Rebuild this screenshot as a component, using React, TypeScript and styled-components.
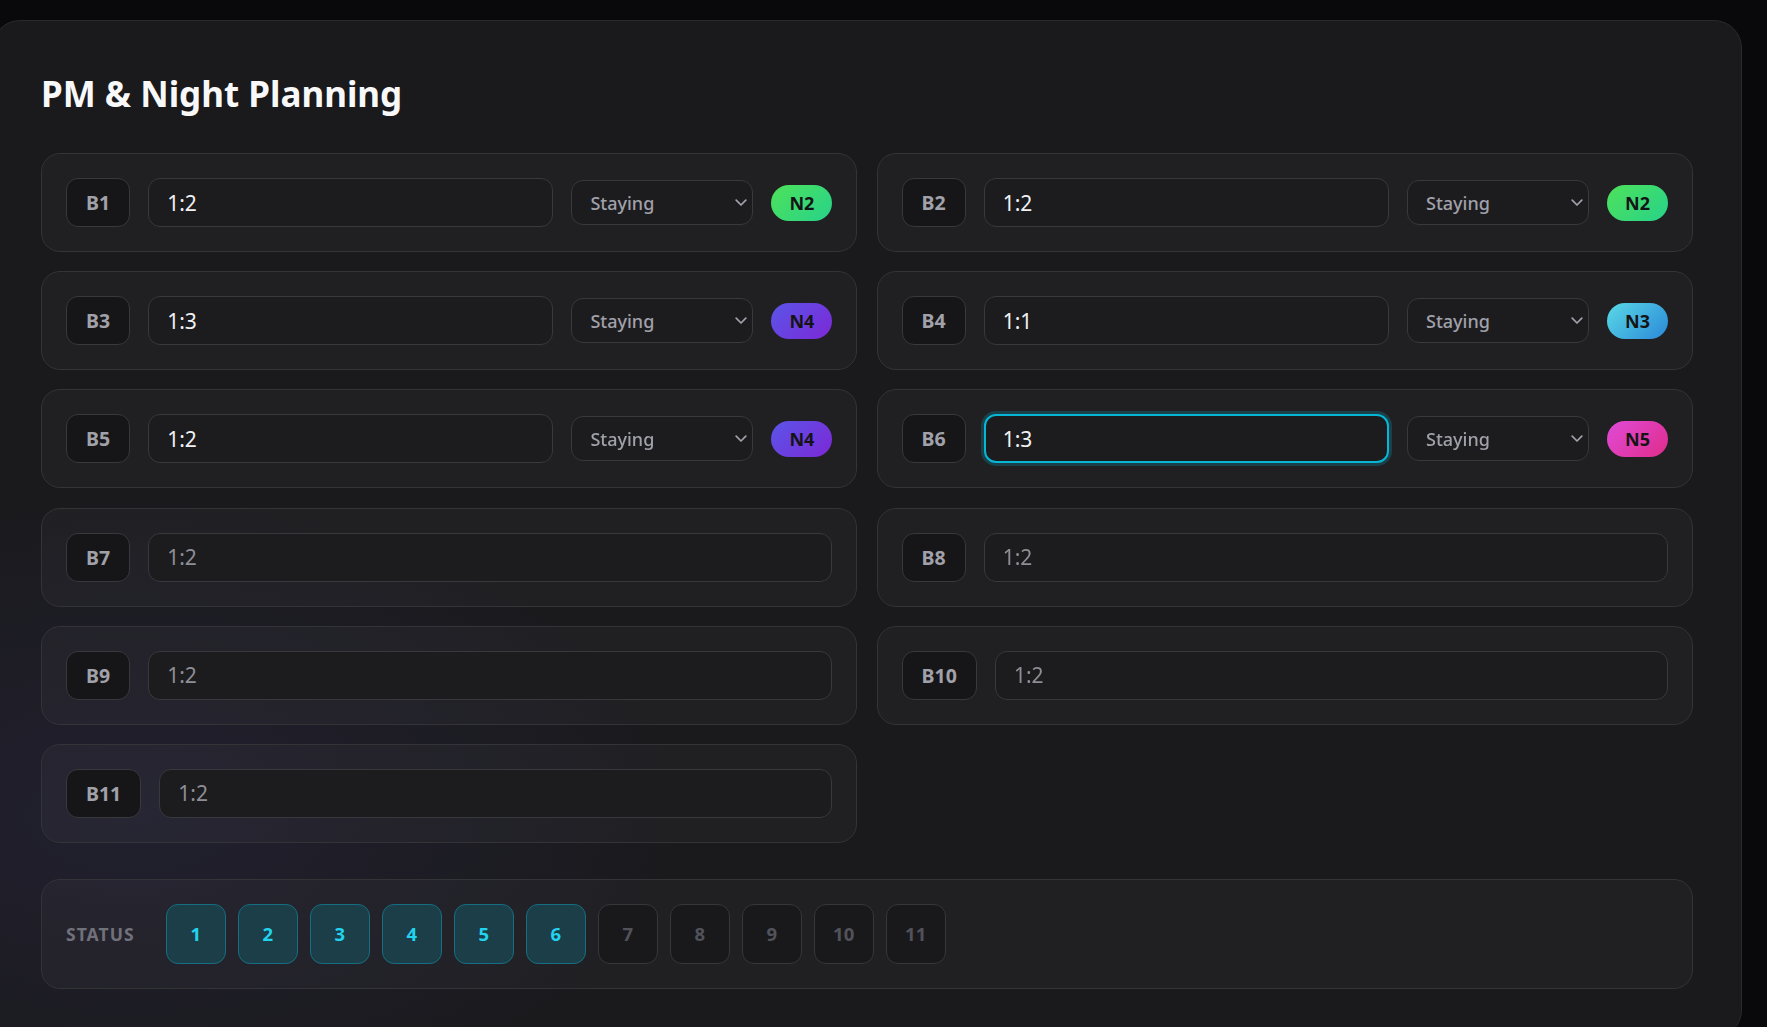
import React, { useEffect, useRef } from "react";
import styled, { createGlobalStyle, css } from "styled-components";

const GlobalStyle = createGlobalStyle`
  html, body {
    margin: 0;
    padding: 0;
    background: #09090b;
  }
  body {
    font-family: "Segoe UI", "Noto Sans", "Open Sans", sans-serif;
    color: #f4f4f5;
    overflow: hidden;
  }
  * { box-sizing: border-box; }
`;

const Page = styled.div`
  padding-top: 20px;
  min-height: 1027px;
`;

const Panel = styled.section`
  margin-left: -8px;
  width: 1750px;
  padding: 48px;
  border: 1px solid #2a2a2e;
  border-radius: 28px;
  background:
    radial-gradient(ellipse 45% 45% at 8% 78%, rgba(72, 62, 140, 0.16), transparent 70%),
    #1a1a1d;
`;

const Title = styled.h1`
  margin: 0 0 36px;
  padding-top: 2px;
  font-size: 35px;
  line-height: 46px;
  font-weight: 700;
  color: #f8f8f9;
`;

const Grid = styled.div`
  display: grid;
  grid-template-columns: 1fr 1fr;
  column-gap: 19.2px;
  row-gap: 19.2px;
  margin-bottom: 36px;
`;

const Card = styled.div`
  display: flex;
  align-items: center;
  gap: 18px;
  padding: 24px;
  border: 1px solid #333338;
  border-radius: 19px;
  background: rgba(255, 255, 255, 0.028);
`;

const BedLabel = styled.div`
  flex: none;
  height: 49px;
  padding: 0 19px;
  display: flex;
  align-items: center;
  justify-content: center;
  border: 1px solid #38383d;
  border-radius: 12px;
  background: #161618;
  color: #a1a1aa;
  font-size: 19.5px;
  font-weight: 700;
`;

const RatioInput = styled.input<{ $focused?: boolean }>`
  flex: 1;
  min-width: 0;
  height: 49px;
  padding: 0 18px;
  border: 1px solid #38383d;
  border-radius: 12px;
  background: #1c1c1f;
  color: #f1f1f3;
  font-family: inherit;
  font-size: 21px;
  outline: none;
  caret-color: #ffffff;
  &::placeholder {
    color: #8e8e96;
  }
  ${(p) =>
    p.$focused &&
    css`
      border: 2px solid #06b6d4;
      padding: 0 17px;
      box-shadow: 0 0 0 3px rgba(6, 182, 212, 0.22);
    `}
`;

const SelectWrap = styled.div`
  position: relative;
  flex: none;
  width: 182px;
  height: 45px;
`;

const Select = styled.select`
  appearance: none;
  width: 100%;
  height: 100%;
  padding: 0 36px 0 18px;
  border: 1px solid #38383d;
  border-radius: 12px;
  background: #1c1c1f;
  color: #a1a1aa;
  font-family: inherit;
  font-size: 18px;
  font-weight: 500;
  outline: none;
`;

const Chevron = styled.svg`
  position: absolute;
  right: 6px;
  top: 50%;
  margin-top: -4px;
  pointer-events: none;
`;

const badgeColors: Record<string, string> = {
  N2: "linear-gradient(135deg, #4ee15a 0%, #27d38a 100%)",
  N3: "linear-gradient(135deg, #5ad9e6 0%, #2a88d8 100%)",
  N4: "linear-gradient(135deg, #5a55e8 0%, #7d28d6 100%)",
  N5: "linear-gradient(135deg, #e04bd8 0%, #df2c8a 100%)",
};

const Badge = styled.span<{ $tone: string }>`
  flex: none;
  width: 61px;
  height: 36px;
  border-radius: 18px;
  display: flex;
  align-items: center;
  justify-content: center;
  background: ${(p) => badgeColors[p.$tone]};
  color: #141416;
  font-size: 18px;
  font-weight: 700;
`;

const StatusCard = styled.div`
  display: flex;
  align-items: center;
  gap: 12px;
  padding: 24px;
  border: 1px solid #333338;
  border-radius: 19px;
  background: rgba(255, 255, 255, 0.028);
`;

const StatusLabel = styled.span`
  margin-right: 19px;
  color: #71717a;
  font-size: 17.5px;
  font-weight: 700;
  letter-spacing: 0.06em;
`;

const StatusBox = styled.div<{ $active: boolean }>`
  width: 60px;
  height: 60px;
  border-radius: 12px;
  display: flex;
  align-items: center;
  justify-content: center;
  font-size: 18.5px;
  font-weight: 700;
  ${(p) =>
    p.$active
      ? css`
          background: #1c3e48;
          border: 1px solid #146f82;
          color: #22d3ee;
        `
      : css`
          background: #19191c;
          border: 1px solid #36363b;
          color: #52525b;
        `}
`;

type Bed = { id: string; value?: string; badge?: string; focused?: boolean };

const beds: Bed[] = [
  { id: "B1", value: "1:2", badge: "N2" },
  { id: "B2", value: "1:2", badge: "N2" },
  { id: "B3", value: "1:3", badge: "N4" },
  { id: "B4", value: "1:1", badge: "N3" },
  { id: "B5", value: "1:2", badge: "N4" },
  { id: "B6", value: "1:3", badge: "N5", focused: true },
  { id: "B7" },
  { id: "B8" },
  { id: "B9" },
  { id: "B10" },
  { id: "B11" },
];

function BedRow({ bed }: { bed: Bed }) {
  const ref = useRef<HTMLInputElement>(null);
  useEffect(() => {
    if (bed.focused && ref.current) {
      ref.current.focus();
      const n = ref.current.value.length;
      ref.current.setSelectionRange(n, n);
    }
  }, [bed.focused]);
  const assigned = bed.value !== undefined;
  return (
    <Card>
      <BedLabel>{bed.id}</BedLabel>
      <RatioInput
        ref={ref}
        $focused={bed.focused}
        defaultValue={bed.value}
        placeholder="1:2"
      />
      {assigned && (
        <>
          <SelectWrap>
            <Select defaultValue="Staying">
              <option>Staying</option>
              <option>Leaving</option>
            </Select>
            <Chevron width="12" height="8" viewBox="0 0 12 8">
              <polyline
                points="1.2,1.2 6,6 10.8,1.2"
                fill="none"
                stroke="#a1a1aa"
                strokeWidth="1.7"
                strokeLinecap="round"
                strokeLinejoin="round"
              />
            </Chevron>
          </SelectWrap>
          <Badge $tone={bed.badge!}>{bed.badge}</Badge>
        </>
      )}
    </Card>
  );
}

export default function App() {
  return (
    <Page>
      <GlobalStyle />
      <Panel>
        <Title>PM &amp; Night Planning</Title>
        <Grid>
          {beds.map((b) => (
            <BedRow key={b.id} bed={b} />
          ))}
        </Grid>
        <StatusCard>
          <StatusLabel>STATUS</StatusLabel>
          {Array.from({ length: 11 }, (_, i) => (
            <StatusBox key={i} $active={i < 6}>
              {i + 1}
            </StatusBox>
          ))}
        </StatusCard>
      </Panel>
    </Page>
  );
}
